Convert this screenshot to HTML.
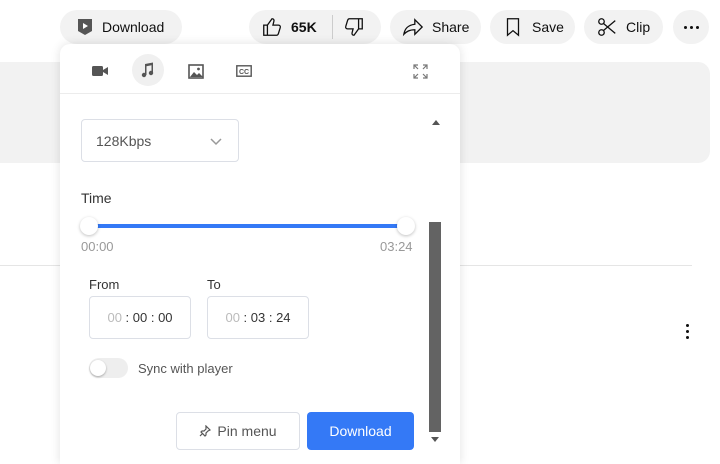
<!DOCTYPE html>
<html><head><style>
body{margin:0;width:720px;height:460px;overflow:hidden;background:#fff;font-family:"Liberation Sans",sans-serif;position:relative}
.a{position:absolute}
.pill{position:absolute;top:10px;height:34px;border-radius:17px;background:#f2f2f2;font-size:14px;font-weight:bold;color:#0f0f0f;display:flex;align-items:center}
.pill svg{margin-right:8px}
.inp{position:absolute;border:1px solid #dcdfe6;border-radius:4px;background:#fff;box-sizing:border-box}
.d{width:3px;height:3px;border-radius:50%;background:#0f0f0f}
</style></head><body>
<div class="a" style="left:0;top:62px;width:710px;height:101px;background:#f2f2f2;border-radius:0 12px 12px 0"></div>
<div class="a" style="left:0;top:265px;width:692px;height:1px;background:#e5e5e5"></div>
<div class="a" style="left:686px;top:324px;width:4px;height:16px">
<div class="d" style="margin-bottom:3px"></div><div class="d" style="margin-bottom:3px"></div><div class="d"></div></div>

<div class="pill" style="left:60px;width:122px;padding-left:16px;box-sizing:border-box"><svg width="18" height="18" viewBox="0 0 18 18"><path d="M2 1h14v12l-7 4-7-4z" fill="#555"/><path d="M7 5l5 3-5 3z" fill="#fff"/></svg><span style="font-weight:normal;font-size:14px">Download</span></div>
<div class="pill" style="left:249px;width:132px"><svg style="margin-left:12px" width="22" height="22" viewBox="0 0 24 24" fill="none" stroke="#0f0f0f" stroke-width="1.4"><path d="M3 10h4v11H3zM7 10l5-7c2 0 2.5 1.5 2 3l-1 4h6c1.5 0 2.5 1.2 2 2.6l-2 6.5c-.3 1.1-1 1.9-2 1.9H7"/></svg><span>65K</span><div style="width:1px;height:24px;background:#ccc;margin-left:15px"></div><svg style="margin-left:10px" width="22" height="22" viewBox="0 0 24 24" fill="none" stroke="#0f0f0f" stroke-width="1.4"><path d="M21 14h-4V3h4zM17 14l-5 7c-2 0-2.5-1.5-2-3l1-4H5c-1.5 0-2.5-1.2-2-2.6L5 4.9C5.3 3.8 6 3 7 3h10"/></svg></div>
<div class="pill" style="left:390px;width:91px;padding-left:12px;box-sizing:border-box"><svg width="22" height="22" viewBox="0 0 24 24" fill="none" stroke="#0f0f0f" stroke-width="1.4"><path d="M14 4l8 8-8 8v-5c-6 0-9 2-12 5 1-6 4-10 12-11z"/></svg><span style="font-weight:normal">Share</span></div>
<div class="pill" style="left:490px;width:85px;padding-left:12px;box-sizing:border-box"><svg width="22" height="22" viewBox="0 0 24 24" fill="none" stroke="#0f0f0f" stroke-width="1.4"><path d="M6 3h12v18l-6-5-6 5z"/></svg><span style="font-weight:normal">Save</span></div>
<div class="pill" style="left:584px;width:79px;padding-left:12px;box-sizing:border-box"><svg width="22" height="22" viewBox="0 0 24 24" fill="none" stroke="#0f0f0f" stroke-width="1.4"><circle cx="6" cy="6" r="3"/><circle cx="6" cy="18" r="3"/><path d="M8 8l13 11M8 16L21 5"/></svg><span style="font-weight:normal">Clip</span></div>
<div class="pill" style="left:673px;width:36px;justify-content:center;gap:3px"><div class="d"></div><div class="d"></div><div class="d"></div></div>

<div class="a" style="left:60px;top:44px;width:400px;height:420px;background:#fff;border-radius:10px 10px 0 0;box-shadow:0 0 10px rgba(0,0,0,.12)">
 <div class="a" style="left:0;top:49px;width:400px;height:1px;background:#ececec"></div>
 <svg class="a" style="left:32px;top:22px" width="16" height="10" viewBox="0 0 16 10"><rect x="0" y="0" width="11" height="10" rx="1.5" fill="#555"/><path d="M11 4l5-3v8l-5-3z" fill="#555"/></svg>
 <div class="a" style="left:72px;top:10px;width:32px;height:32px;border-radius:50%;background:#f0f0f0"></div>
 <svg class="a" style="left:81px;top:18px" width="14" height="16" viewBox="0 0 14 16" fill="#555"><path d="M4 2l8-1.5v10h-1.5V3.2L5.5 4.2V13H4z"/><circle cx="3" cy="13" r="2.2"/><circle cx="10" cy="11" r="2.2"/></svg>
 <svg class="a" style="left:128px;top:20px" width="16" height="15" viewBox="0 0 16 15"><rect x="1" y="1" width="14" height="13" fill="none" stroke="#555" stroke-width="1.6"/><path d="M2 13l4-5 3 3 2-2 4 4z" fill="#555"/><circle cx="10.5" cy="5" r="1.4" fill="#555"/></svg>
 <svg class="a" style="left:176px;top:21px" width="16" height="12" viewBox="0 0 16 12"><rect x=".8" y=".8" width="14.4" height="10.4" fill="none" stroke="#555" stroke-width="1.4"/><text x="8" y="8.8" font-size="7" font-weight="bold" text-anchor="middle" fill="#555" font-family="Liberation Sans">CC</text></svg>
 <svg class="a" style="left:353px;top:20px" width="15" height="15" viewBox="0 0 15 15" fill="none" stroke="#777" stroke-width="1.2"><path d="M1 5V1h4M1 1l4 4M14 5V1h-4M14 1l-4 4M1 10v4h4M1 14l4-4M14 10v4h-4M14 14l-4-4"/></svg>
 <div class="inp" style="left:21px;top:75px;width:158px;height:43px;font-size:14px;color:#555;padding:13px 0 0 14px">128Kbps<svg class="a" style="left:128px;top:18px" width="12" height="8" viewBox="0 0 12 8" fill="none" stroke="#999" stroke-width="1.5"><path d="M1 1l5 5 5-5"/></svg></div>
 <div class="a" style="left:372px;top:76px;width:0;height:0;border-left:4px solid transparent;border-right:4px solid transparent;border-bottom:5px solid #555"></div>
 <div class="a" style="left:21px;top:146px;font-size:14px;color:#333">Time</div>
 <div class="a" style="left:29px;top:180px;width:316px;height:4px;background:#3479f6"></div>
 <div class="a" style="left:20px;top:173px;width:18px;height:18px;border-radius:50%;background:#fff;box-shadow:0 1px 3px rgba(0,0,0,.25)"></div>
 <div class="a" style="left:337px;top:173px;width:18px;height:18px;border-radius:50%;background:#fff;box-shadow:0 1px 3px rgba(0,0,0,.25)"></div>
 <div class="a" style="left:21px;top:195px;font-size:13px;color:#999">00:00</div>
 <div class="a" style="left:320px;top:195px;font-size:13px;color:#999">03:24</div>
 <div class="a" style="left:369px;top:178px;width:12px;height:210px;background:#636363"></div>
 <div class="a" style="left:371px;top:393px;width:0;height:0;border-left:4px solid transparent;border-right:4px solid transparent;border-top:5px solid #555"></div>
 <div class="a" style="left:29px;top:233px;font-size:13px;color:#333">From</div>
 <div class="a" style="left:147px;top:233px;font-size:13px;color:#333">To</div>
 <div class="inp" style="left:29px;top:252px;width:102px;height:43px;font-size:13px;color:#333;text-align:center;line-height:41px"><span style="color:#bbb">00</span> : 00 : 00</div>
 <div class="inp" style="left:147px;top:252px;width:102px;height:43px;font-size:13px;color:#333;text-align:center;line-height:41px"><span style="color:#bbb">00</span> : 03 : 24</div>
 <div class="a" style="left:29px;top:314px;width:39px;height:20px;border-radius:10px;background:#eee"></div>
 <div class="a" style="left:30px;top:316px;width:16px;height:16px;border-radius:50%;background:#fff;box-shadow:0 1px 2px rgba(0,0,0,.3)"></div>
 <div class="a" style="left:78px;top:317px;font-size:13px;color:#555">Sync with player</div>
 <div class="inp" style="left:116px;top:368px;width:124px;height:38px;font-size:14px;color:#555;text-align:center;line-height:36px"><svg width="12" height="12" viewBox="0 0 12 12" fill="none" stroke="#555" stroke-width="1.2" style="vertical-align:-1px;margin-right:6px"><path d="M7 1l4 4-2 1-2 2 0 2-1 1-4-4 1-1 2 0 2-2zM4 8L1 11"/></svg>Pin menu</div>
 <div class="a" style="left:247px;top:368px;width:107px;height:38px;border-radius:4px;background:#3479f6;color:#fff;font-size:14px;text-align:center;line-height:38px">Download</div>
</div>
</body></html>
